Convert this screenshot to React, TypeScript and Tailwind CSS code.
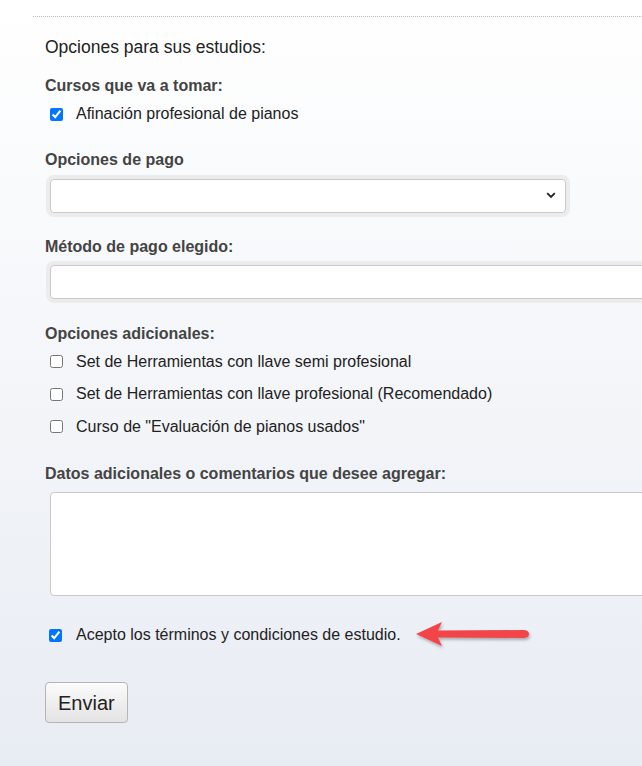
import { useState } from "react"

const body = { fontFamily: "Tahoma, 'Liberation Sans', Arial, sans-serif" }

function Box({ checked }: { checked: boolean }) {
    return (
        <input
            type="checkbox"
            defaultChecked={checked}
            className="w-[13px] h-[13px] m-0 accent-[#0075ff] shrink-0"
        />
    )
}

function Check({ label, checked = false }: { label: string; checked?: boolean }) {
    return (
        <label className="flex items-center gap-[13px] pl-[50px] h-[32.5px] text-[16px] text-[#222]">
            <Box checked={checked} />
            <span>{label}</span>
        </label>
    )
}

export default function App() {
    const [accepted, setAccepted] = useState(true)

    return (
        <div
            className="min-h-[766px] w-[642px] overflow-hidden bg-gradient-to-b from-white to-[#e8ecf3]"
            style={body}
        >
            <div className="pt-[16px] pl-[33px]">
                <div className="border-t border-dotted border-[#bdbdbd]" />
            </div>

            <p className="pl-[45px] mt-[18px] text-[17.5px] text-[#222] leading-[24px]">Opciones para sus estudios:</p>

            <p className="pl-[45px] mt-[17px] text-[16px] font-bold text-[#444] leading-[20px]">Cursos que va a tomar:</p>
            <div className="mt-[2px]">
                <Check label="Afinación profesional de pianos" checked />
            </div>

            <p className="pl-[45px] mt-[19px] text-[16px] font-bold text-[#444] leading-[20px]">Opciones de pago</p>
            <div className="ml-[46px] mt-[5px] w-[524px] p-[4px] rounded-[8px] bg-[#ececec]">
                <div className="h-[34px] bg-white border border-[#c9c9c9] rounded-[4px] flex items-center justify-end pr-[9px]">
                    <svg width="10" height="7" viewBox="0 0 10 7">
                        <path d="M1.2 1.2 L5 5 L8.8 1.2" fill="none" stroke="#222" strokeWidth="1.8" />
                    </svg>
                </div>
            </div>

            <p className="pl-[45px] mt-[20px] text-[16px] font-bold text-[#444] leading-[20px]">Método de pago elegido:</p>
            <div className="ml-[46px] mt-[4px] w-[620px] p-[4px] rounded-[8px] bg-[#ececec]">
                <div className="h-[34px] bg-white border border-[#c9c9c9] rounded-[4px]" />
            </div>

            <p className="pl-[45px] mt-[21px] text-[16px] font-bold text-[#444] leading-[20px]">Opciones adicionales:</p>
            <div className="mt-[2px] flex flex-col">
                <Check label="Set de Herramientas con llave semi profesional" />
                <Check label="Set de Herramientas con llave profesional (Recomendado)" />
                <Check label={'Curso de "Evaluación de pianos usados"'} />
            </div>

            <p className="pl-[45px] mt-[21px] text-[16px] font-bold text-[#444] leading-[20px]">Datos adicionales o comentarios que desee agregar:</p>
            <div className="ml-[50px] mt-[8px] w-[620px] h-[104px] bg-white border border-[#c9c9c9] rounded-[4px]" />

            <div className="mt-[24px] flex items-center h-[30px]">
                <label className="flex items-center gap-[14px] pl-[49px] text-[16px] text-[#222]">
                    <input
                        type="checkbox"
                        checked={accepted}
                        onChange={() => setAccepted(!accepted)}
                        className="w-[13px] h-[13px] m-0 accent-[#0075ff]"
                    />
                    <span>Acepto los términos y condiciones de estudio.</span>
                </label>
                <svg width="120" height="34" viewBox="0 0 120 34" className="ml-[13px]">
                    <defs>
                        <filter id="sh" x="-10%" y="-30%" width="130%" height="180%">
                            <feDropShadow dx="1" dy="2" stdDeviation="1.5" floodColor="#000" floodOpacity="0.3" />
                        </filter>
                    </defs>
                    <g filter="url(#sh)">
                        <path d="M2 16 L28 4 L24 12.5 L110 12 Q115 12.5 115 16 Q115 19.5 110 20 L24 19.5 L28 28 Z" fill="#f24449" />
                    </g>
                </svg>
            </div>

            <div className="pl-[45px] mt-[32px]">
                <button className="h-[41px] px-[12px] text-[20px] text-[#222] border border-[#b5b5b5] rounded-[4px] bg-gradient-to-b from-[#fbfbfb] to-[#e3e3e3]">
                    Enviar
                </button>
            </div>
        </div>
    )
}
